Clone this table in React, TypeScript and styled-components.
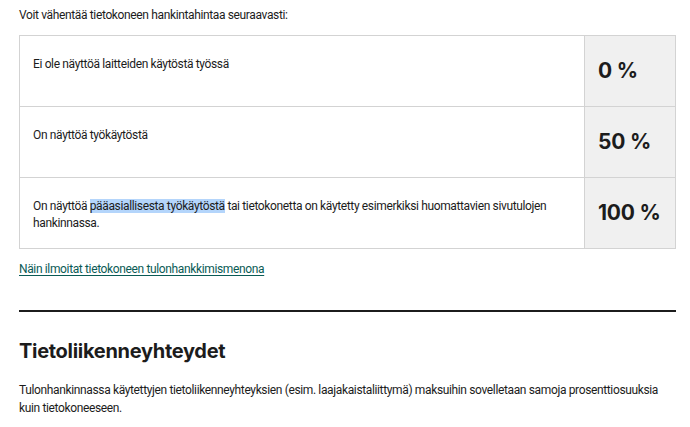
import styled, {createGlobalStyle} from "styled-components";

const GlobalStyle = createGlobalStyle`
    body {
        margin: 0;
        background: #ffffff;
        color: #1c1c1c;
        font-family: Roboto, "Liberation Sans", Arial, sans-serif;
    }
`

export default function App() {
    const rows = [
        {text: <>Ei ole näyttöä laitteiden käytöstä työssä</>, percent: "0 %"},
        {text: <>On näyttöä työkäytöstä</>, percent: "50 %"},
        {
            text: <>On näyttöä <Highlight>pääasiallisesta työkäytöstä</Highlight> tai tietokonetta on käytetty esimerkiksi huomattavien sivutulojen hankinnassa.</>,
            percent: "100 %"
        },
    ]

    return (
        <>
            <GlobalStyle/>
            <Page>
                <Intro>Voit vähentää tietokoneen hankintahintaa seuraavasti:</Intro>
                <Table>
                    <tbody>
                    {rows.map((row) => (
                        <tr key={row.percent}>
                            <TextCell>{row.text}</TextCell>
                            <PercentCell>{row.percent}</PercentCell>
                        </tr>
                    ))}
                    </tbody>
                </Table>
                <Link href="#">Näin ilmoitat tietokoneen tulonhankkimismenona</Link>
                <Divider/>
                <Heading>Tietoliikenneyhteydet</Heading>
                <Paragraph>
                    Tulonhankinnassa käytettyjen tietoliikenneyhteyksien (esim. laajakaistaliittymä) maksuihin
                    sovelletaan samoja prosenttiosuuksia kuin tietokoneeseen.
                </Paragraph>
            </Page>
        </>
    );
}

const Page = styled.main`
    display: flex;
    flex-direction: column;
    align-items: flex-start;
    width: 657px;
    padding: 6px 0 0 19px;
    font-size: 12px;
    letter-spacing: -0.36px;
`

const Intro = styled.p`
    margin: 0 0 11px;
    line-height: 18px;
`

const Table = styled.table`
    width: 100%;
    border-collapse: collapse;
    border: 1px solid #d3d3d3;
`

const TextCell = styled.td`
    border: 1px solid #d3d3d3;
    padding: 20px 30px 16px 13px;
    vertical-align: top;
    line-height: 17px;
`

const PercentCell = styled.td`
    width: 64px;
    border: 1px solid #d3d3d3;
    background: #f0f0f0;
    padding: 20px 13px;
    vertical-align: middle;
    font-family: Inter, "Liberation Sans", sans-serif;
    font-weight: 700;
    font-size: 21px;
    line-height: 30px;
    white-space: nowrap;
    letter-spacing: -0.2px;
`

const Highlight = styled.span`
    background: #b4d5fb;
`

const Link = styled.a`
    margin-top: 11px;
    line-height: 18px;
    color: #0a5b55;
    text-decoration: underline;
    text-underline-offset: 2px;
`

const Divider = styled.hr`
    width: 100%;
    margin: 32px 0 0;
    border: 0;
    height: 2px;
    background: #1c1c1c;
`

const Heading = styled.h2`
    margin: 26px 0 0;
    font-family: Inter, "Liberation Sans", sans-serif;
    font-weight: 700;
    font-size: 20px;
    line-height: 26px;
    letter-spacing: -0.3px;
`

const Paragraph = styled.p`
    margin: 17px 0 0;
    line-height: 18px;
`
